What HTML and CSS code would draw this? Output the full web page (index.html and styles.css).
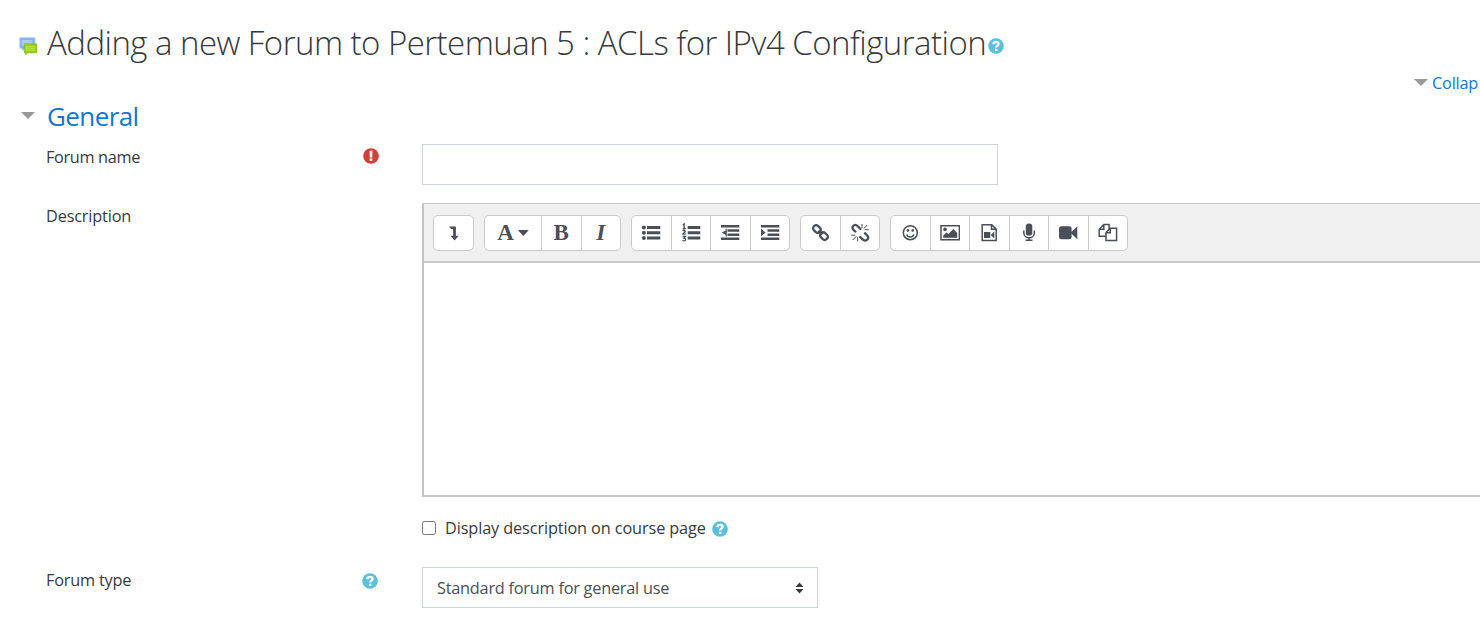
FILE: index.html
```html
<!DOCTYPE html>
<html lang="en">
<head>
<meta charset="utf-8">
<title>Adding a new Forum</title>
<link rel="stylesheet" href="styles.css">
</head>
<body>
<svg class="defs" width="0" height="0" aria-hidden="true">
  <symbol id="help" viewBox="0 0 16 16">
    <circle cx="8" cy="8" r="7.8" fill="#5bc0de"/>
    <path d="M5.300 6.100C5.500 4.400 6.600 3.800 8 3.800c1.500 0 2.500.8 2.500 2.100C10.500 7.700 8.200 7.600 8.200 9.600" fill="none" stroke="#fff" stroke-width="2.300"/>
    <rect x="7" y="10.700" width="2.400" height="2.300" fill="#fff"/>
  </symbol>
</svg>
<main class="page">
  <header class="heading">
    <svg class="forum-icon" viewBox="0 0 18 18">
      <path d="M.8.800h15.200v10.500H5.500L3.200 14v-2.700H.8z" fill="#84aef3" stroke="#a9c8f8" stroke-width=".8"/>
      <path d="M2.800 3h10.500v6H2.800z" fill="#a9cafb"/>
      <path d="M5.300 6.800h12.300v9H8.600L6.700 17.700v-1.900H5.300z" fill="#91cb17" stroke="#86bd18" stroke-width=".8"/>
      <path d="M7 8.700h9v5.200H7z" fill="#b5e437"/>
      <path d="M8 10.300h7M8 12.300h7" stroke="#9bd321" stroke-width=".8"/>
    </svg>
    <h2 class="title">Adding a new Forum to Pertemuan 5 : ACLs for IPv4 Configuration</h2>
    <svg class="help"><use href="#help"/></svg>
  </header>
  <div class="collapse"><i class="caret"></i><a class="collapse-link">Collap</a></div>
  <div class="section"><i class="caret"></i><h3 class="section-title">General</h3></div>

  <div class="row row-name">
    <div class="label"><span class="t-name">Forum name</span>
      <svg class="help" viewBox="0 0 16 16"><circle cx="8" cy="8" r="7.800" fill="#d43f3a"/><path d="M6.500 2.700h3L9.200 9.400H6.800z" fill="#fff"/><rect x="6.700" y="10.400" width="2.600" height="2.600" fill="#fff"/></svg>
    </div>
    <div class="input"></div>
  </div>

  <div class="row row-desc">
    <div class="label"><span class="t-desc">Description</span></div>
    <div class="editor">
      <div class="toolbar">
        <div class="group g1"><span><svg viewBox="0 0 20 20"><path d="M5 3.400h6.900v9.300h2.800l-4.100 4.700-4.100-4.700h2.600V6H7z"/></svg></span></div>
        <div class="group g2"><span class="wide"><b class="glyph">A</b><i class="drop"></i></span><span><b class="glyph">B</b></span><span><b class="glyph ital">I</b></span></div>
        <div class="group g3">
          <span><svg viewBox="0 0 20 20"><circle cx="2.900" cy="4.600" r="2"/><circle cx="2.900" cy="9.700" r="2"/><circle cx="2.900" cy="14.900" r="2"/><path d="M6 3.100h13.300V6H6zM6 8.300h13.300v2.900H6zM6 13.500h13.300v2.900H6z"/></svg></span>
          <span><svg viewBox="0 0 20 20"><path d="M6.700 3.100h12.600V6H6.700zM6.700 8.300h12.600v2.900H6.700zM6.700 13.500h12.600v2.900H6.700z"/><path d="M1.800 1.900 3.200 1V5.600M1.600 5.700h3.200M1.700 8c1-1.300 2.800-.8 2.500.5-.2.900-2.200 1.500-2.400 2.600h3M1.700 13.500h2.700l-1.500 1.700c2.400 0 2.100 3-.2 2.700L1.500 17.500" fill="none" stroke="#495057" stroke-width="1.300"/></svg></span>
          <span><svg viewBox="0 0 20 20"><path d="M1 2.100h18.300v2.500H1zM7.500 6.200h11.800v2.500H7.500zM7.500 10.400h11.800v2.500H7.500zM1 14.600h18.300v2.500H1z"/><path d="M6.800 5.700v7.800H5.600V11.700L1.700 9.600l3.900-2.200V5.700z"/></svg></span>
          <span><svg viewBox="0 0 20 20"><path d="M1 2.100h18.300v2.500H1zM7.500 6.200h11.800v2.500H7.500zM7.500 10.400h11.800v2.500H7.500zM1 14.600h18.300v2.500H1zM1 5.800l4.600 3.800L1 13.300z"/></svg></span>
        </div>
        <div class="group g4">
          <span><svg viewBox="0 0 20 20" class="line"><g stroke-width="2.300" transform="rotate(45 10.300 9.700)"><rect x="1.300" y="6.500" width="8" height="6" rx="2.900"/><rect x="11.300" y="6.500" width="8" height="6" rx="2.900"/><path d="M7.500 9.500h5.500"/></g></svg></span>
          <span><svg viewBox="0 0 20 20" class="line"><path stroke-width="2.300" d="M6 9.300 3.300 6.600C1.800 5 2.700 2.600 4.600 2c1.700-.4 2.600.7 3.700 1.800l2.800 2.900M9.400 13.200l3.200 3.200c1.500 1.500 3.600 1.600 4.800.2 1.300-1.500.9-3-.4-4.300l-2.700-2.700"/><path stroke-width="1" d="M12 1v4M17 2.300l-3.300 3.300M18.700 6.700h-4M1.300 12.200h4M2.700 17l3.600-3.700M7.600 18.300v-4"/></svg></span>
        </div>
        <div class="group g5">
          <span><svg viewBox="0 0 20 20"><g class="line"><circle cx="10.300" cy="9.700" r="7" stroke-width="1.500"/><path stroke-width="1.500" d="M6.700 11.500c1.200 3.300 6 3.300 7.200 0"/></g><circle cx="7.900" cy="7.400" r="1.300"/><circle cx="12.700" cy="7.400" r="1.300"/></svg></span>
          <span><svg viewBox="0 0 20 20"><path class="line" stroke-width="1.500" d="M1 2.700h18.400v14H1z"/><circle cx="5" cy="6.400" r="1.800"/><path d="M3.200 14.800v-2.400l3.400-3L8.400 11.100l4.900-5L17.200 10v4.800z"/></svg></span>
          <span><svg viewBox="0 0 20 20"><path class="line" stroke-width="1.500" d="M3.200 1.700h9.600l4.400 4.400v11.500H3.200zM12.500 1.700v4.600h4.700"/><path d="M5 9h6.300v6.100H5zM11.700 12l3.600-3.600v7.200z"/></svg></span>
          <span><svg viewBox="0 0 20 20"><rect x="6.800" y=".6" width="6.500" height="12" rx="3.200"/><path class="line" stroke-width="1.500" d="M4.800 7.500v2c0 7.100 10.600 7.100 10.600 0v-2M10 14.500v3M6.500 17.200h7"/></svg></span>
          <span><svg viewBox="0 0 20 20"><rect x="1" y="3.200" width="12.600" height="13" rx="2.500"/><path d="m13 9.300 6.300-6v13l-6.300-6z"/></svg></span>
          <span><svg viewBox="0 0 20 20"><path class="line" stroke-width="1.500" d="M7.500 13.300H1.200V6.200L5.800 1.400h5.300v5M5.800 1.400v4.800H1.200M12.200 5.200h6.400v12.300H8V9.600zM12.300 5.200v4.500H8"/></svg></span>
        </div>
      </div>
      <div class="content"></div>
    </div>
  </div>

  <div class="display"><span class="check"></span><span class="t-display">Display description on course page</span><svg class="help"><use href="#help"/></svg></div>

  <div class="row row-type">
    <div class="label"><span class="t-type">Forum type</span><svg class="help"><use href="#help"/></svg></div>
    <div class="select"><span class="t-select">Standard forum for general use</span>
      <svg class="arrows" viewBox="0 0 8 12"><path d="M0 5h8L4 .5zM0 7h8L4 11.500z" fill="#343a40"/></svg></div>
  </div>
</main>
</body>
</html>
```
FILE: styles.css
```css
* { box-sizing: border-box; }
body {
  margin: 0;
  background: #fff;
  color: #373a3c;
  font-family: "Open Sans", "Noto Sans", sans-serif;
  font-size: 16.3px;
  line-height: 24px;
  overflow: hidden;
}
.defs { position: absolute; }
.page { width: 1480px; height: 621px; overflow: hidden; white-space: nowrap; }
.help { width: 16px; height: 16px; flex: none; }
.heading { display: flex; align-items: center; height: 60px; padding: 26px 0 0 19px; }
.forum-icon { width: 18px; height: 18px; margin: 6px 10px 0 0; flex: none; }
.title { margin: 0; width: 941px; font-size: 33px; line-height: 40px; font-weight: 300; letter-spacing: -.54px; }
.heading .help { margin-top: 6px; }
.collapse { display: flex; height: 24px; margin-top: 11px; padding-left: 1414px; }
.caret { width: 14px; height: 7px; flex: none; background: #999; clip-path: polygon(0 0, 100% 0, 50% 100%); }
.collapse .caret { margin: 8px 4px 0 0; }
.collapse-link { color: #1177d1; letter-spacing: -.2px; }
.section { display: flex; height: 48px; padding: 3px 0 0 21px; }
.section .caret { margin: 14px 12px 0 0; }
.section-title { margin: 0; font-size: 26px; line-height: 36px; font-weight: 400; color: #1177d1; letter-spacing: -.6px; }
.row { display: flex; padding-left: 46px; }
.label { display: flex; justify-content: space-between; width: 333px; margin-right: 43px; flex: none; height: 24px; }
.t-name { letter-spacing: -.34px; }
.t-desc { letter-spacing: -.16px; }
.t-display { letter-spacing: -.12px; }
.t-type { letter-spacing: -.2px; }
.t-select { letter-spacing: -.23px; }
.row-name { height: 60px; margin-top: 1px; }
.row-name .label { padding-top: 1px; }
.row-name .help { margin-top: 3px; }
.input { width: 576px; height: 41px; border: 1px solid #ced4da; }
.editor { width: 1100px; height: 294px; margin-top: -1px; border: 1px solid #c4c6c8; border-width: 1px 1px 2px 2px; flex: none; }
.toolbar { display: flex; gap: 10px; height: 59px; padding: 11px 9px; background: #f0f0f0; border-bottom: 2px solid #c5c7c9; }
.group { display: flex; height: 36px; background: #fff; border: 1px solid #c8cacc; border-radius: 5px; flex: none; }
.group > span { flex: 1; display: flex; align-items: center; justify-content: center; }
.group > span + span { border-left: 1px solid #ccc; }
.group svg { width: 20px; height: 20px; fill: #495057; }
.group .line { fill: none; stroke: #495057; }
.g1 { width: 41px; }
.g2 { width: 137px; }
.g2 .wide { flex: 0 0 56px; }
.g3 { width: 159px; }
.g4 { width: 80px; }
.g5 { width: 238px; }
.glyph { font: bold 23px/30px "Liberation Serif", serif; color: #495057; }
.ital { font-style: italic; }
.drop { width: 11px; height: 6px; margin-left: 4px; background: #495057; clip-path: polygon(0 0, 100% 0, 50% 100%); }
.display { display: flex; align-items: center; height: 24px; margin-top: 19px; padding-left: 422px; }
.check { width: 14px; height: 14px; margin-right: 9px; border: 1px solid #767676; border-radius: 2.500px; }
.display .help { margin: 2px 0 0 6px; }
.row-type { margin-top: 27px; }
.row-type .label { padding-top: 1px; }
.row-type .help { margin: 5px 1px 0 0; }
.select { display: flex; align-items: center; justify-content: space-between; width: 396px; height: 41px; padding: 0 13px 0 14px; border: 1px solid #ced4da; color: #495057; }
.arrows { width: 9px; height: 12px; }
```
